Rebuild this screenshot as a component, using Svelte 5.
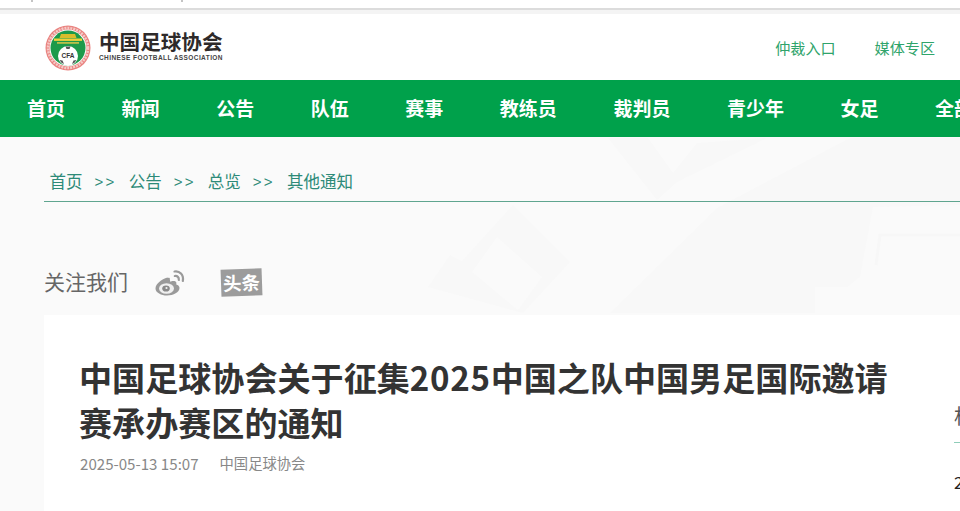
<script>
	const navItems = ['首页', '新闻', '公告', '队伍', '赛事', '教练员', '裁判员', '青少年', '女足', '全部'];
	const crumbs = ['首页', '公告', '总览', '其他通知'];
</script>

<div class="page">
	<div class="browser-strip">
		<div class="strip-top">
			<i class="tick"></i>
			<i class="tick second"></i>
		</div>
		<div class="strip-line"></div>
		<div class="strip-soft"></div>
	</div>

	<header class="header">
		<div class="logo">
			<svg class="badge" viewBox="0 0 46 46" width="46" height="46">
				<circle cx="23" cy="23" r="22.500" fill="#e9827f" />
				<circle cx="23" cy="23" r="20" fill="none" stroke="#f6c9c6" stroke-width="2.500" stroke-dasharray="2 1" />
				<circle cx="23" cy="23" r="18.500" fill="#fff" />
				<circle cx="23" cy="23" r="17.500" fill="#1d9a4a" />
				<path d="M16 9h14l1.500 4h-17z" fill="#d9bd2c" />
				<rect x="9" y="13.500" width="28" height="2.400" fill="#efd23c" />
				<rect x="12" y="17" width="22" height="1.800" fill="#b9c04a" />
				<circle cx="23" cy="31" r="10" fill="#fff" />
				<path d="M20.500 21.500h5l-1 2.500h-3zM14.500 35l3 .5 1.500 3.500-2.500-1.200zM31.500 35l-3 .5-1.500 3.500 2.500-1.200z" fill="#555" />
				<text x="23" y="33" class="cfa">CFA</text>
			</svg>
			<div class="logo-text">
				<div class="logo-cn">中国足球协会</div>
				<div class="logo-en">CHINESE FOOTBALL ASSOCIATION</div>
			</div>
		</div>
		<div class="header-links">
			<a href="#top">仲裁入口</a>
			<a href="#top">媒体专区</a>
		</div>
	</header>

	<nav class="nav">
		{#each navItems as item}
			<a href="#top">{item}</a>
		{/each}
	</nav>

	<main class="content">
		<!-- faint watermark behind the page, coordinates relative to the content top -->
		<svg class="decor" viewBox="0 0 960 374" width="960" height="374">
			<g fill="#f8f8f8">
				<path d="M608 1h40l25 35 24-30 70-5-90 44-20 18z" />
				<path d="M513 68l57 57-47 51-95-26 22-32 12 6zM497 100l-25 35 46 38 24-33z" fill-rule="evenodd" />
				<path d="M610 176L717 71 850 1h110v67l-87 2-13 70-13 10h-32v26z" />
			</g>
			<path d="M962 98h-82l-4 30" fill="none" stroke="#f7f7f7" stroke-width="3" />
		</svg>

		<div class="crumbs">
			{#each crumbs as crumb, i}
				{#if i > 0}<span class="sep">&gt;&gt;</span>{/if}
				<a href="#top">{crumb}</a>
			{/each}
		</div>

		<div class="follow">
			<span class="follow-label">关注我们</span>
			<svg class="weibo" viewBox="0 0 30 27" width="30" height="27">
				<path d="M12.500 8.500C6.500 10 .5 15 .5 19.500.5 23.800 6.400 26.500 12 26.500c6.500 0 12.500-3.300 12.500-7.500 0-2.600-2.800-3.300-3.300-3.500.6-1.800.2-3.400-2.800-3.500-1.300 0-2.500.6-3 .7-.3 0-.6-2.500-.6-3.400-.6-.5-1-.6-1.800-.3z" fill="#9a9a9a" />
				<ellipse cx="11.500" cy="19.500" rx="7.500" ry="5.200" fill="#f0f0f0" />
				<ellipse cx="11" cy="19.500" rx="3.800" ry="3.100" fill="#8a8a8a" />
				<circle cx="11.500" cy="19" r="1.100" fill="#f0f0f0" />
				<path d="M19.500 2.500c5-.9 9.500 3.300 8.300 9.500M19.800 7c2.500-.5 4.400 1.500 4 4" fill="none" stroke="#9a9a9a" stroke-width="2.200" stroke-linecap="round" />
			</svg>
			<span class="toutiao">头条</span>
		</div>

		<section class="card">
			<article class="article">
				<h1>中国足球协会关于征集<span class="year">2025</span>中国之队中国男足国际邀请赛承办赛区的通知</h1>
				<div class="meta">
					<span class="date">2025-05-13 15:07</span>
					<span>中国足球协会</span>
				</div>
			</article>
			<aside class="side">
				<div class="side-title">相关新闻</div>
				<div class="side-date">2025-05-13</div>
			</aside>
		</section>
	</main>
</div>

<style>
	:global(body) {
		margin: 0;
		background: #fafafa;
	}

	.page {
		width: 960px;
		height: 511px;
		overflow: hidden;
		display: flex;
		flex-direction: column;
		font-family: "Noto Sans CJK SC", "Liberation Sans", sans-serif;
	}

	a {
		color: inherit;
		text-decoration: none;
	}

	.browser-strip {
		flex: none;
	}

	.strip-top {
		height: 8px;
		background: #fff;
		display: flex;
	}

	.tick {
		width: 2px;
		height: 2px;
		margin-left: 31px;
		background: #c4c4c4;
	}

	.tick.second {
		margin-left: 148px;
	}

	.strip-line {
		height: 2px;
		background: #dcdcdc;
	}

	.strip-soft {
		height: 4px;
		background: #f4f4f4;
	}

	.header {
		flex: none;
		height: 66px;
		background: #fff;
		display: flex;
		align-items: center;
		justify-content: space-between;
		padding: 0 25px 0 45px;
	}

	.logo {
		display: flex;
		align-items: center;
		gap: 8px;
		margin-top: 1px;
	}

	.badge {
		display: block;
	}

	.cfa {
		font-family: "Liberation Sans", sans-serif;
		font-size: 6.500px;
		font-weight: 700;
		text-anchor: middle;
		fill: #333;
	}

	.logo-text {
		margin-top: -4px;
	}

	.logo-cn {
		font-size: 20.600px;
		line-height: 24px;
		font-weight: 700;
		color: #2e2a2a;
		white-space: nowrap;
	}

	.logo-en {
		font-family: "Liberation Sans", sans-serif;
		font-size: 6.500px;
		line-height: 9px;
		font-weight: 700;
		letter-spacing: 0.42px;
		color: #444;
		white-space: nowrap;
	}

	.header-links {
		display: flex;
		gap: 39px;
		font-size: 15.100px;
		color: #2fa46b;
	}

	.nav {
		flex: none;
		height: 57px;
		box-sizing: border-box;
		padding: 0 0 2px 27px;
		background: #00a14b;
		display: flex;
		align-items: center;
		gap: 56.550px;
		font-size: 19px;
		font-weight: 700;
		color: #fff;
		white-space: nowrap;
		overflow: hidden;
	}

	.content {
		position: relative;
		flex: 1;
		min-height: 0;
		background: #fafafa;
	}

	.decor {
		position: absolute;
		left: 0;
		top: 0;
	}

	.crumbs {
		position: relative;
		margin-left: 44px;
		height: 65px;
		box-sizing: border-box;
		border-bottom: 1px solid #5fa58f;
		padding: 34px 0 10px 5.500px;
		display: flex;
		align-items: center;
		gap: 12px;
		font-size: 16.500px;
		color: #2d8a78;
	}

	.sep {
		font-family: "Liberation Sans", sans-serif;
		font-size: 15px;
		letter-spacing: 2.300px;
	}

	.follow {
		position: relative;
		margin: 67px 0 0 44px;
		height: 27px;
		display: flex;
		align-items: center;
		color: #666;
	}

	.follow-label {
		font-size: 21px;
		width: 111px;
		margin-bottom: 4px;
	}

	.weibo {
		display: block;
	}

	.toutiao {
		margin-left: 36px;
		width: 41px;
		height: 27px;
		background: #9c9c9c;
		color: #fff;
		font-size: 18.500px;
		font-weight: 700;
		line-height: 26px;
		text-align: center;
		transform: rotate(-2deg);
	}

	.card {
		position: relative;
		margin: 19px 0 0 44px;
		background: #fff;
		height: 220px;
		display: flex;
		overflow: hidden;
		padding-left: 35px;
	}

	.article {
		flex: none;
		width: 831px;
		padding-top: 40px;
	}

	h1 {
		margin: 0;
		font-size: 33.100px;
		line-height: 45px;
		font-weight: 700;
		color: #333;
	}

	.year {
		letter-spacing: 0.700px;
	}

	.meta {
		margin: 7px 0 0 1px;
		display: flex;
		gap: 21px;
		font-size: 14.300px;
		line-height: 22px;
		color: #888;
	}

	.date {
		font-size: 15.100px;
	}

	.side {
		flex: none;
		width: 200px;
		margin-left: 44px;
		padding-top: 87px;
	}

	.side-title {
		font-size: 20px;
		line-height: 28px;
		color: #555;
		height: 41px;
		border-bottom: 1px solid #8fcdb9;
		box-sizing: border-box;
		white-space: nowrap;
	}

	.side-date {
		margin-top: 27px;
		font-size: 17px;
		line-height: 24px;
		color: #222;
	}
</style>
